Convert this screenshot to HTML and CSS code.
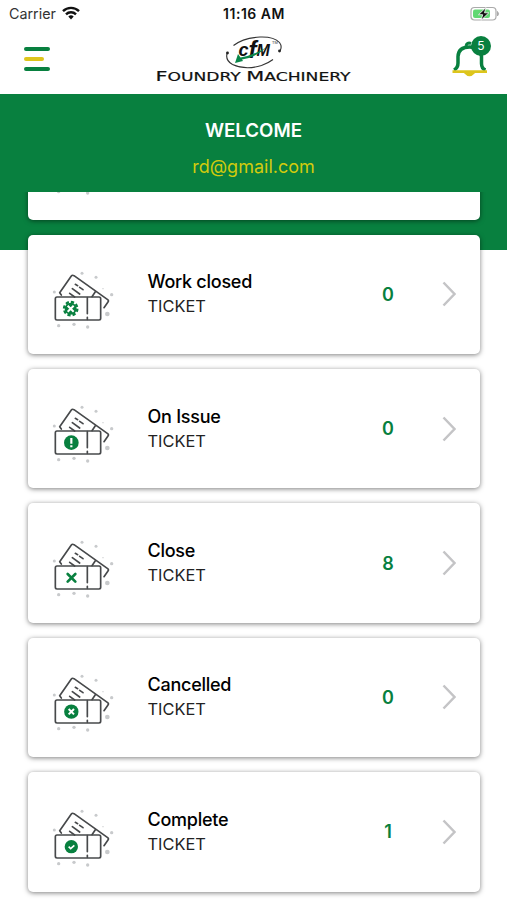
FILE: index.html
```html
<!DOCTYPE html>
<html lang="en">
<head>
  <meta charset="UTF-8" />
  <meta name="viewport" content="width=device-width, initial-scale=1.0"/>
  <title>Foundry Machinery</title>
  <link rel="stylesheet" href="styles.css">
</head>
<body>

  <!-- shared icons -->
  <svg class="sprite">
    <symbol id="tickets" viewBox="0 0 240 194" overflow="visible">
      <g fill="none" stroke="#47494b" stroke-width="5" stroke-linecap="round" stroke-linejoin="round">
        <path d="M49 99l-5-7 35-50q3-4 8-1l101 72q4 3 1 7l-12 17"/>
        <path d="M151 89l-10 15M91 67l7 4M104 76l10 7M82 80l22 16M74 94l15 11"/>
        <rect x="31" y="105" width="136" height="69" rx="5"/>
        <path d="M127 107v48M127 166v6"/>
      </g>
      <g fill="#c8cacc">
        <circle cx="111" cy="34" r="4.5"/>
        <circle cx="153" cy="46" r="4.5"/>
        <circle cx="174" cy="80" r="2"/>
        <circle cx="200" cy="98" r="5"/>
        <circle cx="187" cy="156" r="7"/>
        <circle cx="28" cy="90" r="4.5"/>
        <circle cx="41" cy="191" r="5"/>
        <circle cx="87" cy="187" r="5"/>
        <circle cx="128" cy="195" r="5"/>
      </g>
    </symbol>
    <symbol id="chevron" viewBox="0 0 14 26">
      <path d="M1.5 1.5L12.5 13 1.5 24.5" fill="none" stroke="#c4c4c6" stroke-width="2.5"/>
    </symbol>
  </svg>

  <div class="app">
    <div class="status-bar">
      <div class="carrier">
        <span>Carrier</span>
        <svg class="wifi" viewBox="0 0 18 14">
          <g fill="none" stroke="#111" stroke-width="2.4">
            <path d="M1 5.2a11.3 11.3 0 0 1 16 0"/>
            <path d="M4 8.3a7.1 7.1 0 0 1 10 0"/>
          </g>
          <path d="M6.3 10.6a3.8 3.8 0 0 1 5.4 0L9 13.4z" fill="#111"/>
        </svg>
      </div>
      <div class="time">11:16 AM</div>
      <svg class="battery" viewBox="0 0 30 16">
        <rect x="1" y="1.5" width="25" height="12.5" rx="3.5" fill="#fff" stroke="#aaa" stroke-width="1.2"/>
        <rect x="3" y="3.5" width="17" height="8.5" rx="2" fill="#62d873"/>
        <path d="M27.5 5.5q2 2.3 0 4.5z" fill="#aaa" stroke="#aaa"/>
        <path d="M16 1.5L8.5 8.7h4.2L11 14.3l7.8-7.5h-4.3z" fill="#111" stroke="#fff" stroke-width=".8"/>
      </svg>
    </div>

    <div class="header">
      <div class="menu">
        <span></span>
        <span class="short"></span>
        <span></span>
      </div>

      <svg class="logo" viewBox="0 0 200 50">
        <g fill="none" stroke="#333" stroke-width="1.1">
          <path d="M80.5 10.5Q90 3 107 2 121 1.5 126.5 7.5q3 4 .5 8.5"/>
          <path d="M74.5 17q-3 8 5 12.5 13 6 29 1 7-2.5 11.5-6"/>
        </g>
        <circle cx="126.5" cy="16" r="1.4" fill="#222"/>
        <circle cx="74.5" cy="18" r="1.4" fill="#222"/>
        <text class="logo-mark" x="85.5" y="21"><tspan font-size="18">c</tspan><tspan dy="2" font-size="24">f</tspan><tspan dy="-2" font-size="16">M</tspan></text>
        <path d="M82 28l3-9 2.5 3.5Q100 20.5 113 12.5 103 22.5 89 24.5l1 1.5z" fill="#08874a"/>
        <text class="logo-tm" x="119" y="8.5" font-size="4">TM</text>
        <text class="logo-name" x="2.5" y="45.5" textLength="195" lengthAdjust="spacingAndGlyphs"><tspan font-size="14">F</tspan>OUNDRY <tspan font-size="14">M</tspan>ACHINERY</text>
      </svg>

      <div class="bell">
        <svg viewBox="0 0 36 38">
          <path d="M14 7q1-4 5-2.5" fill="none" stroke="#08803f" stroke-width="3"/>
          <path d="M2 31q4-2 4-7V17.5Q6.5 8 17.5 8T29.5 17.5v7q0 5 4 6.5" fill="none" stroke="#08803f" stroke-width="3.5"/>
          <path d="M.5 32.700h34.5" stroke="#ddc51c" stroke-width="2.8"/>
          <path d="M13 34q4.5 5 9 0z" fill="#ddc51c" stroke="#ddc51c" stroke-width="1.5"/>
        </svg>
        <span class="badge">5</span>
      </div>
    </div>

    <div class="welcome">
      <h1>WELCOME</h1>
      <p>rd@gmail.com</p>
    </div>

    <div class="scroll-area">
      <div class="ticket-list">
        <div class="card">
          <svg class="icon" viewBox="0 0 240 194"><use href="#tickets"/></svg>
        </div>

        <div class="card">
          <svg class="icon" viewBox="0 0 240 194">
            <use href="#tickets"/>
            <circle cx="77" cy="140" r="18" fill="#08803f"/>
            <circle cx="77" cy="140" r="20" fill="none" stroke="#08803f" stroke-width="7" stroke-dasharray="9.7 6.008"/>
            <path d="M68 131l18 18M86 131l-18 18" stroke="#fff" stroke-width="6"/>
          </svg>
          <div class="info">
            <h2>Work closed</h2>
            <p>TICKET</p>
          </div>
          <span class="count">0</span>
          <svg class="arrow"><use href="#chevron"/></svg>
        </div>

        <div class="card">
          <svg class="icon" viewBox="0 0 240 194">
            <use href="#tickets"/>
            <circle cx="79" cy="140" r="22" fill="#08803f"/>
            <path d="M79 126v17M79 148v6" stroke="#fff" stroke-width="6.5"/>
          </svg>
          <div class="info">
            <h2>On Issue</h2>
            <p>TICKET</p>
          </div>
          <span class="count">0</span>
          <svg class="arrow"><use href="#chevron"/></svg>
        </div>

        <div class="card">
          <svg class="icon" viewBox="0 0 240 194">
            <use href="#tickets"/>
            <path d="M68 129l23 23M91 129l-23 23" stroke="#08803f" stroke-width="8" stroke-linecap="round"/>
          </svg>
          <div class="info">
            <h2>Close</h2>
            <p>TICKET</p>
          </div>
          <span class="count">8</span>
          <svg class="arrow"><use href="#chevron"/></svg>
        </div>

        <div class="card">
          <svg class="icon" viewBox="0 0 240 194">
            <use href="#tickets"/>
            <circle cx="79" cy="140" r="21.5" fill="#08803f"/>
            <path d="M71 132l16 16M87 132l-16 16" stroke="#fff" stroke-width="6"/>
          </svg>
          <div class="info">
            <h2>Cancelled</h2>
            <p>TICKET</p>
          </div>
          <span class="count">0</span>
          <svg class="arrow"><use href="#chevron"/></svg>
        </div>

        <div class="card">
          <svg class="icon" viewBox="0 0 240 194">
            <use href="#tickets"/>
            <circle cx="79" cy="140" r="20" fill="#08803f"/>
            <path d="M71 140l6 6 11-10" fill="none" stroke="#fff" stroke-width="5"/>
          </svg>
          <div class="info">
            <h2>Complete</h2>
            <p>TICKET</p>
          </div>
          <span class="count">1</span>
          <svg class="arrow"><use href="#chevron"/></svg>
        </div>
      </div>
    </div>
  </div>

</body>
</html>
```

FILE: styles.css
```css
* {
  box-sizing: border-box;
}

body {
  margin: 0;
  font-family: Inter, "Liberation Sans", sans-serif;
  background: #fff;
  color: #111;
}

h1, h2, p {
  margin: 0;
}

.sprite {
  display: none;
}

.app {
  display: flex;
  flex-direction: column;
  height: 900px;
  overflow: hidden;
}

/* status bar */
.status-bar {
  display: grid;
  grid-template-columns: 1fr auto 1fr;
  align-items: center;
  height: 28px;
  padding: 0 7px 0 9px;
}

.carrier {
  display: flex;
  align-items: center;
  gap: 6px;
  margin-top: -2px;
  font-size: 14.3px;
  color: #333;
}

.wifi {
  width: 18px;
  height: 14px;
}

.time {
  margin: -1px 1px 0 0;
  font-size: 14px;
  font-weight: 600;
  letter-spacing: 0.5px;
}

.battery {
  width: 30px;
  height: 16px;
  margin-top: -1px;
  justify-self: end;
}

/* header */
.header {
  display: flex;
  justify-content: space-between;
  align-items: flex-start;
  height: 66px;
  padding: 7px 16px 0 24px;
}

.menu {
  display: flex;
  flex-direction: column;
  gap: 6px;
  width: 30px;
  padding-top: 12px;
}

.menu span {
  width: 26px;
  height: 4px;
  border-radius: 2px;
  background: #08803f;
}

.menu .short {
  width: 20px;
  background: #ddc51c;
}

.logo {
  width: 200px;
  height: 50px;
}

.logo-mark {
  font-family: "Liberation Sans", Arial, sans-serif;
  font-weight: bold;
  font-style: italic;
  fill: #111;
}

.logo-tm {
  font-family: "Liberation Sans", Arial, sans-serif;
  fill: #333;
}

.logo-name {
  font-family: "DejaVu Sans", sans-serif;
  font-size: 11.5px;
  fill: #111;
  stroke: #111;
  stroke-width: 0.2;
}

.bell {
  position: relative;
  width: 39px;
  height: 42px;
  padding-top: 4px;
}

.bell svg {
  display: block;
  width: 36px;
  height: 38px;
}

.badge {
  position: absolute;
  top: 1px;
  right: 0;
  width: 20px;
  height: 20px;
  border-radius: 50%;
  background: #08803f;
  color: #fff;
  font-size: 12px;
  line-height: 20px;
  text-align: center;
}

/* welcome banner */
.welcome {
  flex-shrink: 0;
  height: 156px;
  padding-top: 25px;
  background: #08803f;
  text-align: center;
}

.welcome h1 {
  color: #fff;
  font-size: 18.7px;
  font-weight: 600;
  line-height: 24px;
}

.welcome p {
  margin-top: 12px;
  color: #d2cb0d;
  font-size: 18px;
  line-height: 24px;
}

/* ticket list, slides up over the banner */
.scroll-area {
  flex: none;
  height: 708.5px;
  margin-top: -58.5px;
  overflow: hidden;
}

.ticket-list {
  display: flex;
  flex-direction: column;
  gap: 14.8px;
  margin-top: -91.4px;
  padding: 0 27px 0 28px;
}

.card {
  display: flex;
  align-items: center;
  height: 119.6px;
  padding: 0 24px 0 17px;
  border-radius: 5px;
  background: #fff;
  box-shadow: 0 1px 5px rgba(0, 0, 0, 0.5);
}

.icon {
  width: 80px;
  height: 64.7px;
  overflow: visible;
}

.info {
  flex: 1;
  padding-left: 22.5px;
}

.info h2 {
  font-size: 18px;
  font-weight: 500;
  line-height: 24px;
  letter-spacing: -0.25px;
  color: #000;
}

.info p {
  font-size: 16.4px;
  line-height: 24px;
  color: #222;
}

.count {
  width: 20px;
  margin-right: 44px;
  color: #08803f;
  font-size: 18px;
  font-weight: 600;
  text-align: center;
}

.arrow {
  width: 14px;
  height: 26px;
}
```
